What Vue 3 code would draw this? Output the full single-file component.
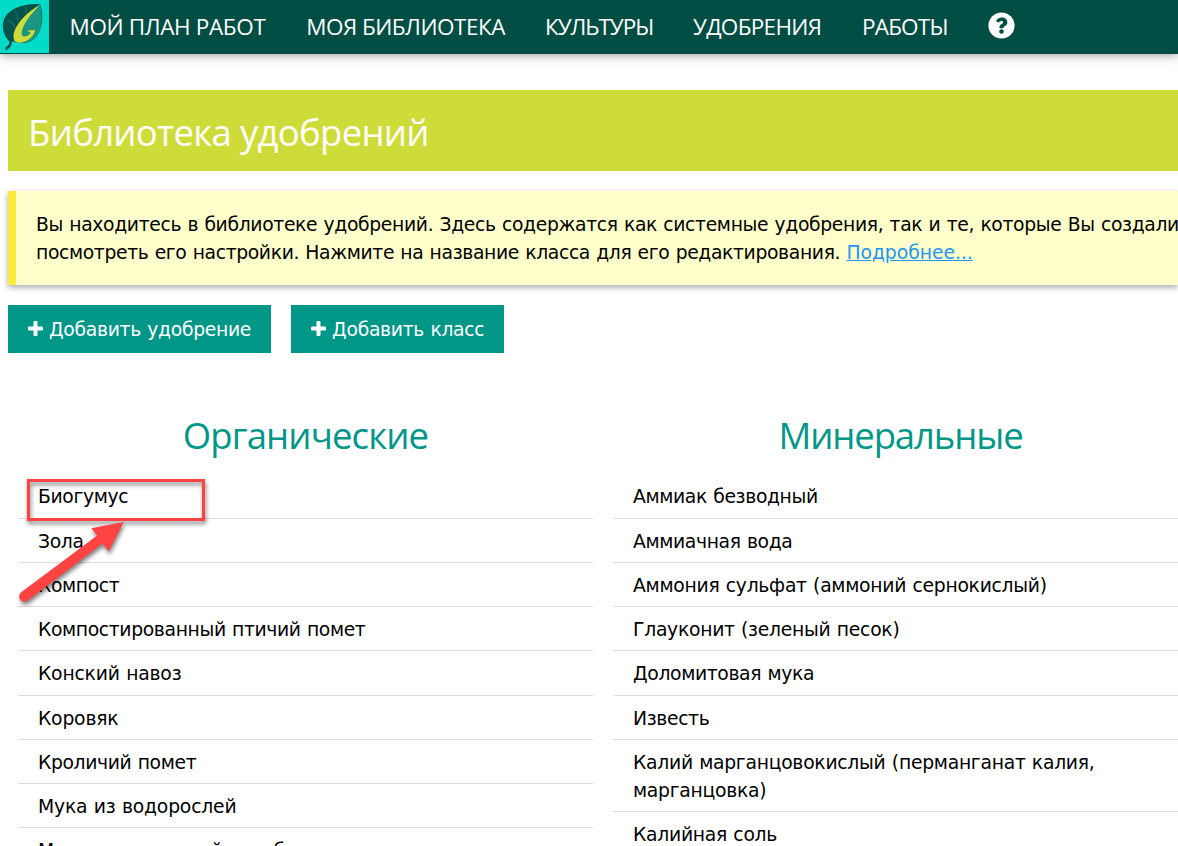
<script setup>
const nav = [
  { label: 'МОЙ ПЛАН РАБОТ', cls: 'plan' },
  { label: 'МОЯ БИБЛИОТЕКА', cls: 'library' },
  { label: 'КУЛЬТУРЫ', cls: 'crops' },
  { label: 'УДОБРЕНИЯ', cls: 'fertilizers' },
  { label: 'РАБОТЫ', cls: 'jobs' },
]
const buttons = ['Добавить удобрение', 'Добавить класс']
const columns = [
  {
    title: 'Органические',
    cls: 'organic',
    items: [
      { name: 'Биогумус' },
      { name: 'Зола' },
      { name: 'Компост' },
      { name: 'Компостированный птичий помет' },
      { name: 'Конский навоз', cls: 'loose' },
      { name: 'Коровяк', cls: 'loose' },
      { name: 'Кроличий помет' },
      { name: 'Мука из водорослей', cls: 'loose' },
      { name: 'Мука из древесной коробки' },
    ],
  },
  {
    title: 'Минеральные',
    cls: 'mineral',
    items: [
      { name: 'Аммиак безводный' },
      { name: 'Аммиачная вода' },
      { name: 'Аммония сульфат (аммоний сернокислый)', cls: 'paren' },
      { name: 'Глауконит (зеленый песок)', cls: 'paren' },
      { name: 'Доломитовая мука' },
      { name: 'Известь' },
      { name: 'Калий марганцовокислый (перманганат калия, марганцовка)', cls: 'paren' },
      { name: 'Калийная соль', cls: 'paren' },
    ],
  },
]
</script>

<template>
  <div class="page">
    <header class="bar">
      <svg class="logo" viewBox="0 0 49 53">
        <rect width="49" height="53" fill="#00dcc8" />
        <path d="M11 43C4 37 1 28 4 19 9 8 24 3 40 4 44 14 43 28 36 37 31 43 20 45 13 41Z" fill="#07534b" />
        <path d="M40 4C43 15 43 27 37 36 31 43 22 44 14 41 20 29 25 15 40 4Z" fill="#1d9583" />
        <path d="M6.500 48.500Q11 46 11 40" fill="none" stroke="#07534b" stroke-width="2.6" stroke-linecap="round" />
        <path d="M7 20Q12 21 15 28M15 11Q18 15 18 21M25 7Q27 9 26 13" fill="none" stroke="#147468" stroke-width="1.2" />
        <path d="M40 5C28 11 14 25 13.500 36 13 43 19 44 25 41.500 31 39 35 34 35 29.500 32 31 30 29.500 27.500 31 29 32.500 31 31.500 30.500 33 28 36.500 23 38 22 35 20 30 28 16 40 5Z" fill="#cddc39" />
      </svg>
      <nav class="nav">
        <a v-for="n in nav" :key="n.label" class="nav-item" :class="n.cls">{{ n.label }}</a>
      </nav>
      <svg class="help" viewBox="0 0 512 512">
        <circle cx="256" cy="256" r="248" fill="#fff" />
        <path d="M151 173C176 132 208 106 263 106c57 0 104 39 104 91 0 66-73 71-73 98v13h-77v-19c0-58 68-65 68-91 0-17-14-25-31-25-24 0-39 15-53 33Z" fill="#004d43" />
        <circle cx="256" cy="371" r="43" fill="#004d43" />
      </svg>
    </header>

    <main class="content">
      <div class="title"><h1>Библиотека удобрений</h1></div>
      <div class="note">
        <div class="one">Вы находитесь в библиотеке удобрений. Здесь содержатся как системные удобрения, так и те, которые Вы создали</div>
        <div>посмотреть его настройки. Нажмите на название класса для его редактирования. <a class="more">Подробнее...</a></div>
      </div>
      <div class="actions">
        <button v-for="b in buttons" :key="b" class="btn">
          <svg class="plus" viewBox="0 0 15 15"><path d="M5.500 1q0-1 1-1h2q1 0 1 1v4.500H14q1 0 1 1v2q0 1-1 1H9.500V14q0 1-1 1h-2q-1 0-1-1V9.500H1q-1 0-1-1v-2q0-1 1-1h4.500Z" fill="#fff" /></svg>
          <span>{{ b }}</span>
        </button>
      </div>
      <div class="columns">
        <section v-for="c in columns" :key="c.title">
          <h2 :class="c.cls">{{ c.title }}</h2>
          <ul>
            <li v-for="i in c.items" :key="i.name" :class="i.cls">{{ i.name }}</li>
          </ul>
        </section>
      </div>
    </main>

    <div class="highlight"></div>
    <svg class="arrow" viewBox="0 0 130 100">
      <path d="M21.200 72.200 97.200 15.500 91.300 8.200 123.700 2.100 108.800 31.400 102.500 23.400 27.800 80.500A5.300 5.300 0 0 1 21.200 72.200Z" fill="#ff4343" />
    </svg>
  </div>
</template>

<style>
body { margin: 0; background: #fff; }
html, body { overflow: hidden; }
</style>

<style scoped>
.page {
  position: relative;
  width: 1178px;
  height: 846px;
  overflow: hidden;
  background: #fff;
  color: #000;
  font-family: Verdana, "DejaVu Sans", sans-serif;
  font-size: 18.75px;
  line-height: 28.125px;
  letter-spacing: -0.36px;
  word-spacing: 0.65px;
}
.bar {
  display: flex;
  align-items: center;
  height: 54px;
  background: #004d43;
  box-shadow: 0 2px 6px rgba(0, 0, 0, .16), 0 2px 12px rgba(0, 0, 0, .2);
}
.logo { width: 49px; height: 53px; align-self: flex-start; }
.nav { display: flex; }
.nav-item {
  box-sizing: border-box;
  padding-left: 20.5px;
  color: #fff;
  font: 22.5px/34px "Open Sans", sans-serif;
  word-spacing: 0;
  white-space: nowrap;
}
.plan { width: 236.7px; letter-spacing: -0.36px; }
.library { width: 238.8px; letter-spacing: -0.5px; }
.crops { width: 148px; letter-spacing: -1.05px; }
.fertilizers { width: 169px; letter-spacing: -0.7px; }
.jobs { width: 126.5px; letter-spacing: -0.8px; }
.help { width: 27px; height: 27px; margin: -3px 0 0 20px; }
.content { padding: 36px 0 0 8px; }
.title {
  height: 81px;
  padding: 0 20px;
  background: #cddc39;
  color: #fff;
}
h1, h2 {
  margin: 0;
  font-family: "Open Sans", sans-serif;
  font-size: 36.5px;
  font-weight: 400;
  word-spacing: 0;
  white-space: nowrap;
}
h1 { line-height: 84px; letter-spacing: -0.7px; }
.organic { letter-spacing: -0.85px; }
.mineral { letter-spacing: -1.1px; }
.note {
  height: 94px;
  margin-top: 20px;
  padding: 20px 0 0 20px;
  box-sizing: border-box;
  border-left: 8px solid #ffeb3b;
  background: #ffc;
  box-shadow: 0 2px 6px rgba(0, 0, 0, .2), 0 3px 6px rgba(0, 0, 0, .16);
  white-space: nowrap;
}
.one { letter-spacing: -0.34px; }
.more { color: #2196f3; text-decoration: underline; letter-spacing: -0.03px; }
.actions { display: flex; gap: 20px; margin-top: 20px; }
.btn {
  display: flex;
  align-items: center;
  gap: 6px;
  height: 48px;
  padding: 2px 20px 0;
  border: 0;
  background: #009688;
  color: #fff;
  font: inherit;
  letter-spacing: -0.3px;
  word-spacing: inherit;
  white-space: nowrap;
}
.plus { width: 15px; height: 15px; margin-top: -3px; }
.columns {
  display: grid;
  grid-template-columns: 575px 575px;
  gap: 20px;
  padding: 55px 0 0 10px;
}
h2 {
  height: 66.35px;
  line-height: 54px;
  color: #009688;
  text-align: center;
}
ul { margin: 0; padding: 0; list-style: none; }
li {
  padding: 9.05px 20px 6.075px;
  border-bottom: 1px solid #ddd;
}
.paren { letter-spacing: -0.27px; }
.loose { letter-spacing: -0.19px; }
.highlight {
  position: absolute;
  left: 27px;
  top: 479px;
  width: 172px;
  height: 36px;
  border: 3px solid #ff4343;
  filter: drop-shadow(1px 3px 2px rgba(0, 0, 0, .5));
}
.arrow {
  position: absolute;
  left: 0;
  top: 520px;
  width: 130px;
  height: 100px;
  filter: drop-shadow(1px 3px 2px rgba(0, 0, 0, .5));
}
</style>
